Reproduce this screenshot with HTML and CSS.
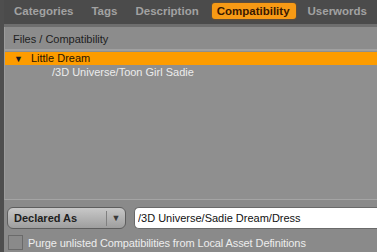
FILE: index.html
```
<!DOCTYPE html>
<html lang="en">

<head>
  <meta charset="UTF-8">
  <meta name="viewport" content="width=device-width, initial-scale=1.0">
  <title>Compatibility</title>
  <link rel="stylesheet" href="styles.css">
</head>

<body>
  <div class="window">
    <div class="tabs">
      <span class="tab">Categories</span>
      <span class="tab">Tags</span>
      <span class="tab">Description</span>
      <span class="tab active">Compatibility</span>
      <span class="tab">Userwords</span>
    </div>

    <div class="panel">
      <div class="tree">
        <div class="tree-head">Files / Compatibility</div>
        <div class="row selected"><span class="arrow">&#9660;</span>Little Dream</div>
        <div class="row child">/3D Universe/Toon Girl Sadie</div>
      </div>

      <div class="controls">
        <div class="select">
          <span class="select-label">Declared As</span>
          <span class="select-btn">&#9660;</span>
        </div>
        <input class="path" type="text" value="/3D Universe/Sadie Dream/Dress">
      </div>

      <label class="purge">
        <span class="box"></span>
        Purge unlisted Compatibilities from Local Asset Definitions
      </label>
    </div>
  </div>
</body>

</html>
```

FILE: styles.css
```
body {
  margin: 0;
  font-family: Arial, "Liberation Sans", sans-serif;
  background: #5a5a5a;
}

.window {
  width: 377px;
  height: 252px;
  overflow: hidden;
  display: flex;
  flex-direction: column;
  border-left: 4px solid #4e4e4e;
  box-sizing: border-box;
}

.tabs {
  display: flex;
  align-items: center;
  padding-left: 5px;
  background: #4b4b4b;
  border-bottom: 3px solid #6e6e6e;
  box-sizing: border-box;
  height: 27px;
  padding-bottom: 3px;
  white-space: nowrap;
}

.tab {
  font-size: 11.5px;
  font-weight: bold;
  color: #a2a2a2;
  padding: 2px 5px 2px;
  margin-right: 8px;
}

.active {
  background: #f79a15;
  color: #3a1800;
  border-radius: 3px;
  padding-right: 6px;
  margin-right: 7px;
  box-shadow: 0 0 2px #9a5a10;
}

.panel {
  flex: 1;
  display: flex;
  flex-direction: column;
  background: #8a8a8a;
}

.tree {
  flex: 1;
  background: #8f8f8f;
  border-left: 1px solid #9c9c9c;
  border-bottom: 1px solid #a4a4a4;
  margin-bottom: 7px;
}

.tree-head {
  font-size: 11px;
  color: #1e1e1e;
  padding: 6px 0 3px 8px;
  border-bottom: 2px solid #a0a0a0;
  background: #8c8c8c;
  height: 13px;
}

.row {
  font-size: 11px;
  height: 13px;
  line-height: 13px;
}

.selected {
  margin-top: 1px;
  background: #fd9c00;
  color: #2a1400;
  padding-left: 9px;
}

.arrow {
  font-size: 9px;
  color: #1a1a1a;
  margin-right: 8px;
}

.child {
  margin-top: 1px;
  color: #ececec;
  padding-left: 47px;
}

.controls {
  display: flex;
  align-items: center;
  padding: 0 0 0 3px;
  gap: 8px;
}

.select {
  width: 119px;
  height: 22px;
  display: flex;
  align-items: center;
  border: 1px solid #5e5e5e;
  border-radius: 6px;
  background: linear-gradient(#c8c8c8, #9e9e9e);
  box-sizing: border-box;
}

.select-label {
  flex: 1;
  font-size: 11px;
  font-weight: bold;
  color: #1e1e1e;
  padding-left: 6px;
}

.select-btn {
  width: 18px;
  font-size: 9px;
  color: #3a3a3a;
  text-align: center;
  border-left: 1px solid #808080;
  line-height: 15px;
}

.path {
  flex: 1;
  height: 22px;
  font-family: Arial, "Liberation Sans", sans-serif;
  font-size: 11px;
  color: #111;
  border: 1px solid #6a6a6a;
  border-radius: 5px 0 0 5px;
  border-right: none;
  padding: 0 3px;
  box-sizing: border-box;
  outline: none;
}

.purge {
  display: flex;
  align-items: center;
  gap: 5px;
  font-size: 11px;
  letter-spacing: -0.1px;
  color: #ededed;
  padding: 6px 0 2px 4px;
}

.box {
  width: 15px;
  height: 15px;
  border: 1px solid #6a6a6a;
  background: #8a8a8a;
  box-sizing: border-box;
}
```
